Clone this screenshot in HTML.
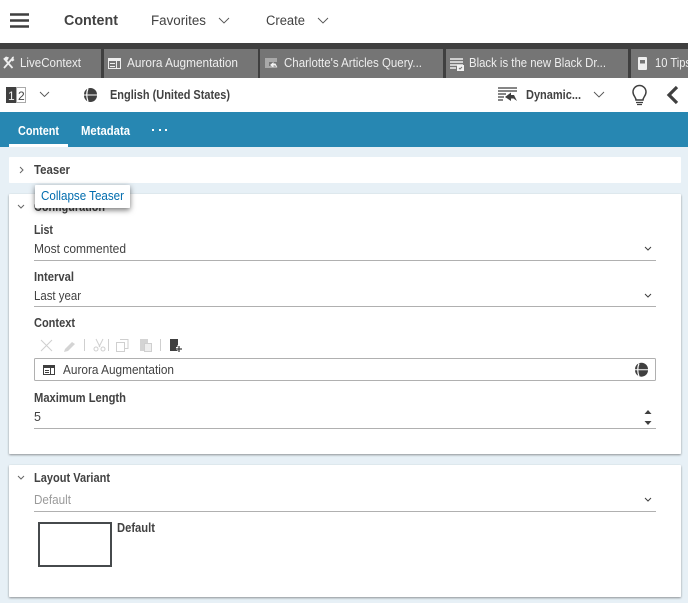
<!DOCTYPE html>
<html><head><meta charset="utf-8"><style>
html,body{margin:0;padding:0;width:688px;height:603px;overflow:hidden;background:#e7f0f6}
svg{display:block}
text{font-family:"Liberation Sans",sans-serif;font-size:12.5px;fill:#424242}
.b{font-weight:bold}
.w{fill:#fff}
.t{fill:#eee}
.s{fill:none;stroke:#555;stroke-width:.9}
.d{fill:none;stroke:#cfcfcf;stroke-width:1}
</style></head><body>
<svg width="688" height="603" viewBox="0 0 688 603" xmlns="http://www.w3.org/2000/svg">
<defs>
<filter id="sh" x="-5%" y="-5%" width="110%" height="110%"><feDropShadow dx="0" dy="1" stdDeviation="1" flood-color="#000" flood-opacity=".4"/></filter>
<filter id="tp" x="-20%" y="-40%" width="140%" height="190%"><feDropShadow dx="0" dy="2" stdDeviation="3" flood-color="#000" flood-opacity=".55"/></filter>
</defs>
<rect width="688" height="603" fill="#e7f0f6"/>
<!-- top bar -->
<rect width="688" height="43" fill="#fff"/>
<path d="M10 14.500h19M10 20.500h19M10 26.500h19" stroke="#3f3f3f" stroke-width="2.400" fill="none"/>
<text x="64" y="25" class="b" style="font-size:14.500px" textLength="54" lengthAdjust="spacingAndGlyphs">Content</text>
<text x="151" y="25" style="font-size:13.500px" textLength="55" lengthAdjust="spacingAndGlyphs">Favorites</text>
<path class="s" d="M219 18l5 5 5-5"/>
<text x="266" y="25" style="font-size:13.500px" textLength="39" lengthAdjust="spacingAndGlyphs">Create</text>
<path class="s" d="M318 18l5 5 5-5"/>
<!-- tabs -->
<rect y="43" width="688" height="35" fill="#3f3f3f"/>
<rect x="0" y="49" width="101" height="29" fill="#757575"/>
<rect x="104" y="49" width="154" height="29" fill="#757575"/>
<rect x="260" y="49" width="183" height="29" fill="#757575"/>
<rect x="446" y="49" width="182" height="29" fill="#757575"/>
<rect x="631" y="49" width="57" height="29" fill="#757575"/>
<path d="M4 68l8-9M4.500 59l8 9" stroke="#eee" stroke-width="1.800" fill="none"/><path d="M3 59l3-2.500 3 1-2 3.500zM11 60l1-3 2-.5-.5 2.500 1 1-2 1.500z" fill="#eee"/>
<text x="20" y="67" class="t" textLength="61" lengthAdjust="spacingAndGlyphs">LiveContext</text>
<path d="M108.500 58.500h12v10h-12z" fill="none" stroke="#eee"/><path d="M108 58h13v3h-13zM110 63h5v1h-5zM110 66h5v1h-5z" fill="#eee"/><path d="M116.500 61v8" stroke="#eee"/>
<text x="127" y="67" class="t" textLength="111" lengthAdjust="spacingAndGlyphs">Aurora Augmentation</text>
<path d="M265 59h12M265 61h12M265 63h4M265 65h4M265 67h12" stroke="#ddd" fill="none"/><path d="M270 65l3.500-3v1.500h2l2 4-2.500-2h-1.500v2z" fill="#f2f2f2"/>
<text x="284" y="67" class="t" textLength="138" lengthAdjust="spacingAndGlyphs">Charlotte's Articles Query...</text>
<path d="M450 58h13v2h-13zM450 61h13v2h-13zM450 64h13v2h-13zM450 67h6v2h-6z" fill="#d0d0d0"/><rect x="457" y="65" width="7" height="6" fill="#f2f2f2"/><path d="M459 68l1 1 2-2" stroke="#757575" fill="none"/>
<text x="469" y="67" class="t" textLength="137" lengthAdjust="spacingAndGlyphs">Black is the new Black Dr...</text>
<rect x="638" y="57" width="9" height="13" rx="1" fill="#eee"/><rect x="640" y="60" width="5" height="3.500" fill="#757575"/>
<text x="655" y="67" class="t" textLength="36" lengthAdjust="spacingAndGlyphs">10 Tips</text>
<!-- toolbar -->
<rect y="78" width="688" height="34" fill="#fff"/>
<rect x="6" y="87" width="10" height="16" fill="#3f3f3f"/><rect x="16.500" y="87.500" width="9" height="15" fill="none" stroke="#aaa"/>
<text x="8" y="100" style="font-size:12px;fill:#eee">1</text><text x="18" y="100" style="font-size:12px">2</text>
<path class="s" d="M40 92l4.500 4.500 4.500-4.500"/>
<path d="M84 94.500a6.500 6.500 0 0 1 13 0zM84 95.500a6.500 6.500 0 0 0 13 0z" fill="#3f3f3f"/><path d="M88 88.500q-2.500 6 0 13" stroke="#fff" stroke-width="1.200" fill="none"/>
<text x="110" y="99" class="b" textLength="120" lengthAdjust="spacingAndGlyphs">English (United States)</text>
<path d="M498 88h19M498 91h19M498 94h8M498 97h6M498 100h5" stroke="#3f3f3f" stroke-width="1.200" fill="none"/>
<path d="M505 97l6-4.500v2.500h3l3 6-3.500-2.500h-2.500v2.500z" fill="#3f3f3f"/>
<text x="526" y="99" class="b" textLength="55" lengthAdjust="spacingAndGlyphs">Dynamic...</text>
<path class="s" d="M594 92l5 5 5-5"/>
<path d="M636 100c0-3-3-4-3-8a6.500 6.500 0 0 1 13 0c0 4-3 5-3 8z" fill="none" stroke="#3f3f3f" stroke-width="1.500"/><path d="M636 102.500h7M637 104.500h5" stroke="#3f3f3f" stroke-width="1.300"/>
<path d="M677 87l-8 8 8 8" fill="none" stroke="#3f3f3f" stroke-width="3.200"/>
<!-- blue tabs -->
<rect y="112" width="688" height="35" fill="#2787b2"/>
<rect x="9" y="144" width="59" height="3" fill="#fff"/>
<text x="18" y="135" class="b w" textLength="41" lengthAdjust="spacingAndGlyphs">Content</text>
<text x="81" y="135" class="b w" textLength="49" lengthAdjust="spacingAndGlyphs">Metadata</text>
<path d="M152 130h2M159 130h2M165 130h2" stroke="#fff" stroke-width="2" fill="none"/>
<!-- Teaser -->
<rect x="9" y="157" width="672" height="26" rx="1" fill="#fff"/>
<path d="M20 167l3 3-3 3" fill="none" stroke="#666"/>
<text x="34" y="174" class="b" textLength="36" lengthAdjust="spacingAndGlyphs">Teaser</text>
<!-- Config -->
<rect x="9" y="194" width="672" height="260" rx="1" fill="#fff" filter="url(#sh)"/>
<path d="M18 205l3 3 3-3" fill="none" stroke="#666"/>
<text x="34" y="211" class="b" textLength="71" lengthAdjust="spacingAndGlyphs">Configuration</text>
<text x="34" y="234" class="b" textLength="19" lengthAdjust="spacingAndGlyphs">List</text>
<text x="34" y="253" textLength="92" lengthAdjust="spacingAndGlyphs">Most commented</text>
<path d="M645 247l3 3 3-3" fill="none" stroke="#3f3f3f"/>
<rect x="34" y="260" width="622" height="1" fill="#b0b0b0"/>
<text x="34" y="281" class="b" textLength="40" lengthAdjust="spacingAndGlyphs">Interval</text>
<text x="34" y="300" textLength="47" lengthAdjust="spacingAndGlyphs">Last year</text>
<path d="M645 294l3 3 3-3" fill="none" stroke="#3f3f3f"/>
<rect x="34" y="306" width="622" height="1" fill="#b0b0b0"/>
<text x="34" y="327" class="b" textLength="41" lengthAdjust="spacingAndGlyphs">Context</text>
<path class="d" d="M41 340l11 11M52 340l-11 11"/>
<path d="M65 349l7-7 3 2-7 7-4 1z" fill="#d4d4d4"/>
<path class="d" d="M84.500 339v12M108.500 339v12M160.500 339v12"/>
<path class="d" d="M96 339l4 8M103 339l-4 8"/><circle class="d" cx="96" cy="349" r="2"/><circle class="d" cx="103" cy="349" r="2"/>
<path class="d" d="M120 339.500h8v9h-3M116.500 342.500h8v9h-8z"/>
<path d="M140 339h8v12h-8z" fill="#d4d4d4"/><rect x="144.500" y="343.500" width="7" height="8" fill="#eee" stroke="#cfcfcf"/>
<path d="M170 339h8v12h-8z" fill="#3f3f3f"/><path d="M179 345v7M176 348.500h6" stroke="#fff" stroke-width="3"/><path d="M179 346v6M176 349h6" stroke="#3f3f3f" stroke-width="1.300"/>
<rect x="34.500" y="358.500" width="621" height="22" rx="1" fill="#fff" stroke="#b0b0b0"/>
<path d="M43.500 365.500h11v9h-11z" fill="none" stroke="#3f3f3f"/><path d="M43 365h12v3h-12zM45 370h4v1h-4zM45 372h4v1h-4z" fill="#3f3f3f"/><path d="M50.500 368v6" stroke="#3f3f3f"/>
<text x="63" y="374" textLength="111" lengthAdjust="spacingAndGlyphs">Aurora Augmentation</text>
<path d="M635 369.200a6.500 6.500 0 0 1 13 0zM635 370.200a6.500 6.500 0 0 0 13 0z" fill="#3f3f3f"/><path d="M639 363.500q-2.500 6 0 13" stroke="#fff" stroke-width="1.200" fill="none"/>
<text x="34" y="402" class="b" textLength="92" lengthAdjust="spacingAndGlyphs">Maximum Length</text>
<text x="34" y="421">5</text>
<path d="M644.500 414l3.500-4 3.500 4zM644.500 421l3.500 4 3.500-4z" fill="#3f3f3f"/>
<rect x="34" y="428" width="622" height="1" fill="#b0b0b0"/>
<!-- Layout -->
<rect x="9" y="465" width="672" height="132" rx="1" fill="#fff" filter="url(#sh)"/>
<path d="M18 476l3 3 3-3" fill="none" stroke="#666"/>
<text x="34" y="482" class="b" textLength="76" lengthAdjust="spacingAndGlyphs">Layout Variant</text>
<text x="34" y="504" style="fill:#9a9a9a" textLength="37" lengthAdjust="spacingAndGlyphs">Default</text>
<path d="M645 498l3 3 3-3" fill="none" stroke="#3f3f3f"/>
<rect x="34" y="511" width="622" height="1" fill="#b0b0b0"/>
<rect x="39" y="523" width="72" height="43" fill="#fff" stroke="#464a4c" stroke-width="2"/>
<text x="117" y="532" class="b" textLength="38" lengthAdjust="spacingAndGlyphs">Default</text>
<!-- tooltip -->
<rect x="35" y="185" width="95" height="23" rx="1" fill="#fff" filter="url(#tp)"/>
<text x="41" y="200" style="fill:#006cae" textLength="83" lengthAdjust="spacingAndGlyphs">Collapse Teaser</text>
</svg>
</body></html>
